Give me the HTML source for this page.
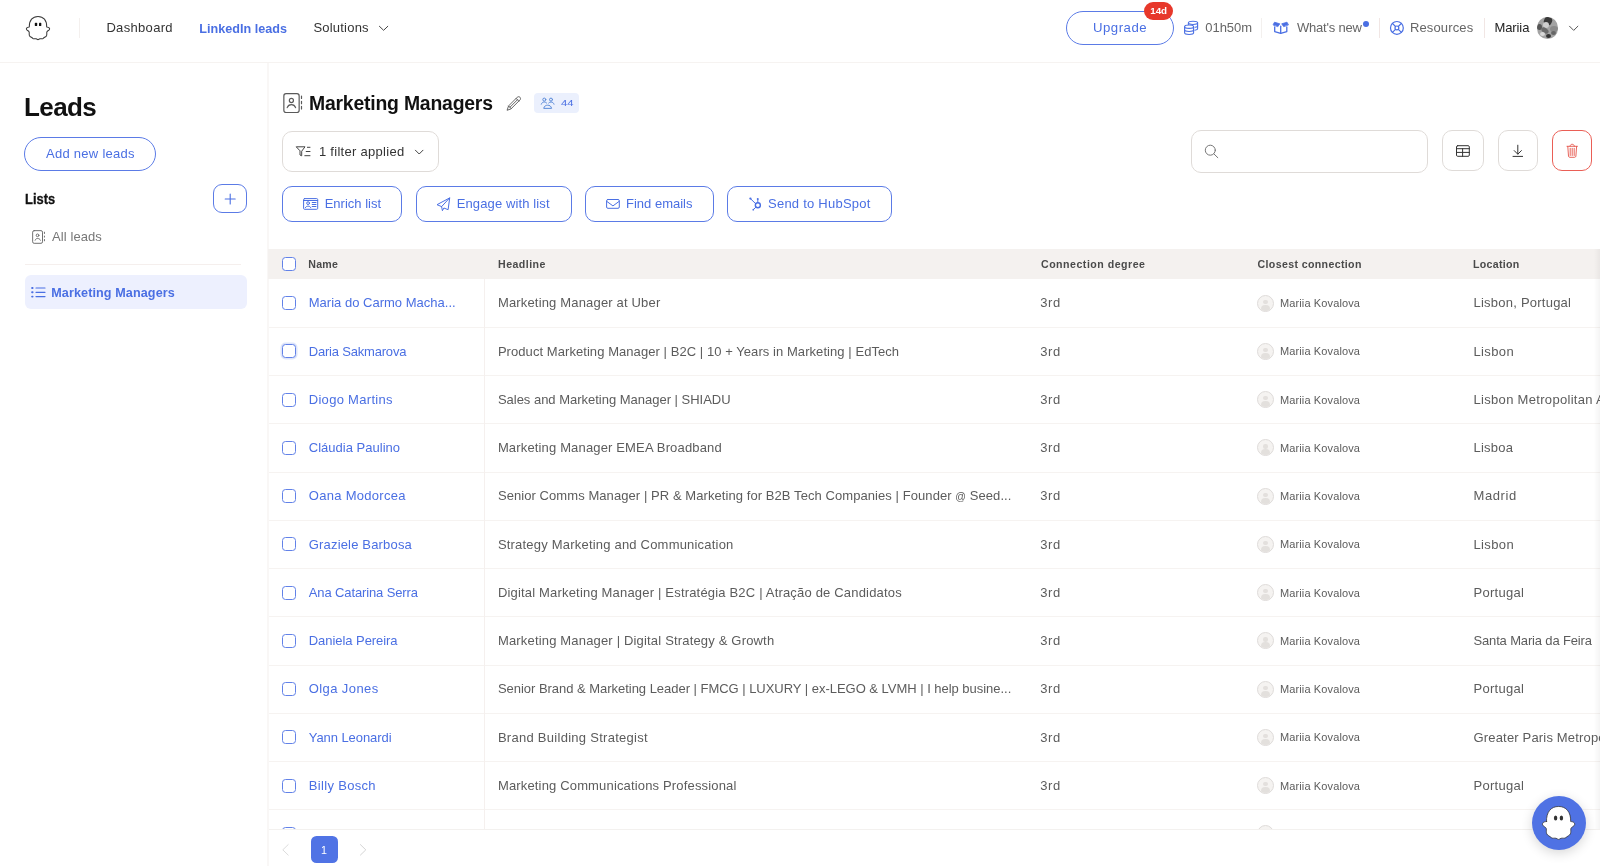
<!DOCTYPE html>
<html lang="en">
<head>
<meta charset="utf-8">
<title>Leads - Marketing Managers</title>
<style>
*{box-sizing:border-box;margin:0;padding:0}
html,body{width:1600px;height:866px;overflow:hidden;background:#fff}
body{font-family:"Liberation Sans",sans-serif;color:#1f1f1f;position:relative;font-size:13px}
.t{position:absolute;white-space:pre}
.b{position:absolute}
svg{position:absolute;overflow:visible}
.ln{position:absolute;background:#f5f2f0}
.cb{position:absolute;left:282px;width:14px;height:14px;border:1.1px solid #6282e8;border-radius:3.5px;background:#fff}
.av{position:absolute;left:1257px;width:17px;height:17px;border-radius:50%;border:1px solid #dedbd9;background:#f5f3f1;overflow:hidden}
.av:before{content:"";position:absolute;left:5.3px;top:4px;width:4.4px;height:4.4px;border-radius:50%;background:#e3e0dd}
.av:after{content:"";position:absolute;left:3px;top:9px;width:9px;height:9px;border-radius:4px 4px 0 0;background:#e3e0dd}
.btn{position:absolute;border:1px solid #5b7be6;background:#fff}
.gbtn{position:absolute;border:1px solid #dfdbd8;background:#fff;border-radius:10px}
</style>
</head>
<body>
<div id="app" style="position:absolute;left:0;top:0;width:1600px;height:866px;will-change:transform">
<!-- nav -->
<div class="ln" style="left:0;top:61.5px;width:1600px;height:1.5px;background:#f6f3f1"></div>
<div class="ln" style="left:79px;top:18px;width:1px;height:20px;background:#f4f0ee"></div>
<div class="btn" style="left:1066px;top:11px;width:108px;height:34px;border-radius:17px"></div>
<div class="b" style="left:1143.8px;top:1.9px;width:29.4px;height:18.4px;border-radius:9.2px;background:#e7382b"></div>
<div class="ln" style="left:1261px;top:18px;width:1px;height:20px;background:#f3f0ee"></div>
<div class="ln" style="left:1379px;top:18px;width:1px;height:20px;background:#f1e6e4"></div>
<div class="ln" style="left:1484px;top:18px;width:1px;height:20px;background:#f1e6e4"></div>
<div class="b" style="left:1363px;top:20.6px;width:6.4px;height:6.4px;border-radius:50%;background:#4a6fe3"></div>
<!-- sidebar -->
<div class="ln" style="left:267.2px;top:63px;width:1.7px;height:803px;background:#f9f7f6"></div>
<div class="btn" style="left:24px;top:137px;width:132px;height:34px;border-radius:17px"></div>
<div class="btn" style="left:213px;top:184px;width:34px;height:29px;border-radius:9px"></div>
<div class="ln" style="left:24.5px;top:264px;width:216px;height:1px;background:#f5efed"></div>
<div class="b" style="left:24.8px;top:275px;width:222.4px;height:34.1px;border-radius:6px;background:#edf0fe"></div>
<!-- main head -->
<div class="b" style="left:534.1px;top:93px;width:44.9px;height:20px;border-radius:4px;background:#ebf0fd"></div>
<div class="gbtn" style="left:282px;top:131px;width:156.5px;height:41px"></div>
<div class="btn" style="left:282px;top:186px;width:120px;height:36px;border-radius:10px"></div>
<div class="btn" style="left:416px;top:186px;width:156px;height:36px;border-radius:10px"></div>
<div class="btn" style="left:585px;top:186px;width:129px;height:36px;border-radius:10px"></div>
<div class="btn" style="left:727px;top:186px;width:165px;height:36px;border-radius:10px"></div>
<div class="gbtn" style="left:1191px;top:130px;width:237px;height:42.5px"></div>
<div class="gbtn" style="left:1442px;top:130px;width:42px;height:40.5px"></div>
<div class="gbtn" style="left:1498px;top:130px;width:40px;height:40.5px"></div>
<div class="gbtn" style="left:1552px;top:130px;width:40px;height:40.5px;border-color:#ea5f56"></div>
<!-- table -->
<div class="b" style="left:268px;top:249px;width:1332px;height:30px;background:#f4f1ef"></div>
<div class="cb" style="top:257px"></div>
<div class="ln" style="left:269px;top:326.75px;width:1331px;height:1.2px;background:#f6f3f1"></div>
<div class="cb" style="top:296.10px"></div>
<div class="av" style="top:294.60px"></div>
<div class="ln" style="left:269px;top:375.00px;width:1331px;height:1.2px;background:#f6f3f1"></div>
<div class="cb" style="top:344.35px;box-shadow:0 0 0 1.5px rgba(74,111,227,0.18)"></div>
<div class="av" style="top:342.85px"></div>
<div class="ln" style="left:269px;top:423.25px;width:1331px;height:1.2px;background:#f6f3f1"></div>
<div class="cb" style="top:392.60px"></div>
<div class="av" style="top:391.10px"></div>
<div class="ln" style="left:269px;top:471.50px;width:1331px;height:1.2px;background:#f6f3f1"></div>
<div class="cb" style="top:440.85px"></div>
<div class="av" style="top:439.35px"></div>
<div class="ln" style="left:269px;top:519.75px;width:1331px;height:1.2px;background:#f6f3f1"></div>
<div class="cb" style="top:489.10px"></div>
<div class="av" style="top:487.60px"></div>
<div class="ln" style="left:269px;top:568.00px;width:1331px;height:1.2px;background:#f6f3f1"></div>
<div class="cb" style="top:537.35px"></div>
<div class="av" style="top:535.85px"></div>
<div class="ln" style="left:269px;top:616.25px;width:1331px;height:1.2px;background:#f6f3f1"></div>
<div class="cb" style="top:585.60px"></div>
<div class="av" style="top:584.10px"></div>
<div class="ln" style="left:269px;top:664.50px;width:1331px;height:1.2px;background:#f6f3f1"></div>
<div class="cb" style="top:633.85px"></div>
<div class="av" style="top:632.35px"></div>
<div class="ln" style="left:269px;top:712.75px;width:1331px;height:1.2px;background:#f6f3f1"></div>
<div class="cb" style="top:682.10px"></div>
<div class="av" style="top:680.60px"></div>
<div class="ln" style="left:269px;top:761.00px;width:1331px;height:1.2px;background:#f6f3f1"></div>
<div class="cb" style="top:730.35px"></div>
<div class="av" style="top:728.85px"></div>
<div class="ln" style="left:269px;top:809.25px;width:1331px;height:1.2px;background:#f6f3f1"></div>
<div class="cb" style="top:778.60px"></div>
<div class="av" style="top:777.10px"></div>
<div class="ln" style="left:269px;top:857.50px;width:1331px;height:1.2px;background:#f6f3f1"></div>
<div class="cb" style="top:826.85px"></div>
<div class="av" style="top:825.35px"></div>
<div class="ln" style="left:484px;top:279px;width:1px;height:550px;background:#f5f0ee"></div>
<div class="b" style="left:1594px;top:249px;width:6px;height:580px;background:linear-gradient(to right,rgba(0,0,0,0),rgba(0,0,0,0.045))"></div>
<!-- footer -->
<div class="b" style="left:269px;top:829px;width:1331px;height:37px;background:#fff;border-top:1px solid #f3f1ef"></div>
<div class="b" style="left:311px;top:836.2px;width:26.6px;height:26.6px;border-radius:5.5px;background:#5073e5"></div>
<div class="b" style="left:1537px;top:17.3px;width:21.4px;height:21.4px;border-radius:50%;overflow:hidden;background:#a3a3a3">
<div class="b" style="left:7px;top:0;width:8px;height:8px;background:#3a3a3a;border-radius:40%;transform:rotate(20deg)"></div>
<div class="b" style="left:6px;top:5px;width:6px;height:6px;background:#cfcfcf;border-radius:50%"></div>
<div class="b" style="left:0;top:7px;width:5px;height:6px;background:#555;border-radius:50%"></div>
<div class="b" style="left:4px;top:11px;width:8px;height:5px;background:#6a6a6a;border-radius:50%;transform:rotate(35deg)"></div>
<div class="b" style="left:13px;top:9px;width:8px;height:6px;background:#8a8a8a;border-radius:50%"></div>
<div class="b" style="left:9px;top:17px;width:5px;height:4px;background:#333;border-radius:50%"></div>
<div class="b" style="left:14px;top:14px;width:5px;height:4px;background:#666;border-radius:50%"></div>
<div class="b" style="left:3px;top:15px;width:5px;height:4px;background:#d8d8d8;border-radius:50%"></div>
</div>
<!-- chat bubble -->
<div class="b" style="left:1532px;top:796px;width:54px;height:54px;border-radius:50%;background:#4f72e4;box-shadow:0 3px 12px rgba(0,0,0,0.16)"></div>
<svg width="1600" height="866" viewBox="0 0 1600 866" style="left:0;top:0" fill="none" stroke-linecap="round" stroke-linejoin="round">
<defs>
<path id="ghost" d="M3.3 11 C3.1 4.2 6.6 0.4 12 0.4 C17.4 0.4 20.9 4.2 20.7 11 C21.6 11.1 22.6 11.2 23.2 11.9 C24.1 12.9 23.4 13.9 22.4 14.5 C21.6 15 20.9 15.4 20.8 16.2 C20.7 17.4 21 18.6 20.5 19.7 C19.8 21 18.3 21.3 17.3 22.3 C16.4 23.1 14.9 22.5 13.8 22.8 C13.1 23 12.6 23.6 12 23.6 C11.4 23.6 10.9 23 10.2 22.8 C9.1 22.5 7.6 23.1 6.7 22.3 C5.7 21.3 4.2 21 3.5 19.7 C3 18.6 3.3 17.4 3.2 16.2 C3.1 15.4 2.4 15 1.6 14.5 C0.6 13.9 -0.1 12.9 0.8 11.9 C1.4 11.2 2.4 11.1 3.3 11 Z"/>
<g id="contact">
<rect x="0.6" y="0.6" width="16.2" height="19.6" rx="2.2"/>
<circle cx="8.7" cy="7.6" r="2.1"/>
<path d="M4.4 14.6 C5.2 12.4 6.8 11.6 8.7 11.6 C10.6 11.6 12.2 12.4 13 14.6"/>
<path d="M18.9 2.9V5.6M18.9 8.1V10.9M18.9 13.3V16.2"/>
</g>
</defs>
<!-- logo ghost -->
<use href="#ghost" x="26" y="16" stroke="#3a3a3a" stroke-width="1.05" fill="#fff"/>
<rect x="34.8" y="22.7" width="2.4" height="3.4" rx="0.7" fill="#111"/>
<rect x="39" y="22.7" width="2.3" height="3.4" rx="0.7" fill="#111"/>
<!-- solutions chevron -->
<path d="M379.4 26.3 L383.6 30.3 L387.8 26.3" stroke="#444" stroke-width="1"/>
<!-- coins -->
<g stroke="#4a6fe3" stroke-width="1.1">
<ellipse cx="1189.1" cy="26.7" rx="4.5" ry="1.7"/>
<path d="M1184.6 26.7V32.8C1184.6 33.8 1186.6 34.5 1189.1 34.5C1191.6 34.5 1193.6 33.8 1193.6 32.8V26.7"/>
<path d="M1184.6 29.8C1184.6 30.8 1186.6 31.5 1189.1 31.5C1191.6 31.5 1193.6 30.8 1193.6 29.8"/>
<path d="M1188.4 24.4V22.8C1188.4 21.8 1190.5 21.2 1193 21.2C1195.5 21.2 1197.6 21.8 1197.6 22.8V28.6C1197.6 29.4 1196.6 30 1194.9 30.2"/>
<path d="M1197.6 22.8C1197.6 23.8 1195.600 24.500 1193 24.500C1191.400 24.500 1190 24.200 1189.200 23.800"/>
<path d="M1197.6 25.7C1197.6 26.5 1196.6 27.1 1195 27.3"/>
</g>
<!-- gift/box -->
<g stroke="#4a6fe3" stroke-width="1.3">
<path d="M1274.7 27V31.6L1280.7 33.4L1286.8 31.6V27"/>
<path d="M1280.7 26.2V33.2"/>
<path d="M1273.2 24.6L1274.5 22.2L1279.8 23.8L1278 26.4Z" fill="#4a6fe3" stroke-width="0.8"/>
<path d="M1288.3 24.6L1287 22.2L1281.7 23.8L1283.5 26.4Z" fill="#4a6fe3" stroke-width="0.8"/>
</g>
<!-- lifebuoy -->
<g stroke="#4a6fe3" stroke-width="1.2">
<circle cx="1396.9" cy="27.9" r="6.4"/>
<circle cx="1396.9" cy="27.9" r="1.9"/>
<path d="M1392.4 23.4L1395.5 26.5M1401.4 23.4L1398.3 26.5M1392.4 32.4L1395.5 29.3M1401.4 32.4L1398.3 29.3"/>
</g>
<!-- user chevron -->
<path d="M1569.5 26.2L1573.7 30.4L1577.9 26.2" stroke="#555" stroke-width="1"/>
<!-- plus -->
<path d="M230.2 194V204M225.2 199H235.2" stroke="#4a6fe3" stroke-width="1.1"/>
<!-- all leads icon -->
<g stroke="#686868" stroke-width="0.95">
<rect x="32.650" y="230.650" width="9.850" height="12.650" rx="1.500"/>
<circle cx="37.550" cy="235.350" r="1.350"/>
<path d="M35.150 240.200C35.600 238.900 36.400 238.500 37.550 238.500C38.700 238.500 39.950 238.900 40.400 240.200"/>
<path d="M44.450 232.200V233.500M44.450 236.100V237.100M44.450 239.500V240.800"/>
</g>
<!-- list icon -->
<g stroke="#4a6fe3" stroke-width="1.2">
<path d="M36 288H45M36 292.3H45M36 296.6H45"/>
<path d="M32.1 288H32.6M32.1 292.3H32.6M32.1 296.6H32.6" stroke-width="1.9"/>
</g>
<!-- title contact icon -->
<g stroke="#5a5a5a" stroke-width="1.2">
<rect x="283.850" y="93.700" width="15.300" height="18.800" rx="2.200"/>
<circle cx="291.400" cy="100.500" r="2.050"/>
<path d="M287.200 107.600C288 105.400 289.500 104.600 291.400 104.600C293.300 104.600 294.800 105.400 295.600 107.600"/>
<path d="M301.500 96V98.400M301.500 101.300V103.700M301.500 106.400V109"/>
</g>
<!-- pencil -->
<g stroke="#555" stroke-width="0.9">
<path d="M507.2 109.9L508.6 105.9L517.3 97.2C518 96.5 519.2 96.5 519.9 97.2L520 97.3C520.7 98 520.7 99.2 520 99.9L511.3 108.6Z"/>
<path d="M508.6 105.9L511.3 108.6M516.1 98.4L518.8 101.1M510 107.2L517.5 99.7"/>
</g>
<!-- people icon -->
<g stroke="#5b8bd9" stroke-width="1">
<circle cx="544.3" cy="99.6" r="1.5"/><circle cx="551" cy="99.6" r="1.5"/>
<path d="M541.3 104.2C541.8 102.6 543 102 544.3 102C545.2 102 546 102.4 546.6 103"/>
<path d="M554 104.2C553.500 102.600 552.300 102 551 102C550.100 102 549.300 102.400 548.700 103"/>
<path d="M543.800 108C544.300 106 545.800 105.200 547.650 105.200C549.500 105.200 551 106 551.500 108Z"/>
</g>
<!-- filter icon -->
<g stroke="#444" stroke-width="1">
<path d="M296.600 146.800H305L301.700 151.200V155.800L300 155V151.200Z"/>
<path d="M307.400 147.300H310M306.200 151.500H310M304.800 155.700H310"/>
<path d="M415.400 150.200L419.200 154L423 150.200"/>
</g>
<!-- enrich id card -->
<g stroke="#4a6fe3" stroke-width="1">
<rect x="303.600" y="198.600" width="14.100" height="10.700" rx="1"/>
<path d="M303.600 200.500H317.700"/>
<circle cx="308.100" cy="203.150" r="1.400"/>
<path d="M305.400 207.700C305.900 206.500 306.900 206.200 308.100 206.200C309.300 206.200 310.300 206.500 310.800 207.700"/>
<path d="M312.200 202.500H316M312.200 204.500H316M312.200 206.500H316"/>
</g>
<!-- plane -->
<path d="M449.700 197.900L437 204.700L441.600 206.600L449.700 197.900L448.100 209.700L443.900 208L442.400 210.700L441.600 206.600" stroke="#4a6fe3" stroke-width="1"/>
<!-- mail -->
<g stroke="#4a6fe3" stroke-width="1">
<rect x="606.600" y="199.500" width="12.700" height="8.800" rx="1.300"/>
<path d="M606.800 201.400L612.950 205.900L619.100 201.400"/>
</g>
<!-- hubspot -->
<g stroke="#4a6fe3">
<circle cx="757.850" cy="205.200" r="2.500" stroke-width="1.400"/>
<path d="M757.800 202.500V199.500M755.700 203.700L750.800 199M755.900 207.200L753.600 209.400" stroke-width="1"/>
<circle cx="757.750" cy="198.900" r="1" fill="#4a6fe3" stroke="none"/>
<circle cx="750.400" cy="198.600" r="1.150" fill="#4a6fe3" stroke="none"/>
<circle cx="753.300" cy="209.700" r="0.850" fill="#4a6fe3" stroke="none"/>
</g>
<!-- search -->
<g stroke="#777" stroke-width="1">
<circle cx="1210.300" cy="150.200" r="5"/>
<path d="M1213.900 153.900L1217.800 157.700"/>
</g>
<!-- table icon -->
<g stroke="#333" stroke-width="1">
<rect x="1456.500" y="145.700" width="12.800" height="10.600" rx="1.200"/>
<path d="M1456.500 148.700H1469.300M1456.500 152.400H1469.300M1462.600 148.700V156.300"/>
</g>
<!-- download -->
<g stroke="#333" stroke-width="1">
<path d="M1517.800 145.200V154M1514.200 150.600L1517.800 154.200L1521.400 150.600M1513 156.400H1522.600"/>
</g>
<!-- trash -->
<g stroke="#e5534a" stroke-width="0.9">
<path d="M1567 146.300H1577.400"/>
<path d="M1570 146.200C1570.300 144.700 1571.200 144.300 1572.200 144.300C1573.200 144.300 1574.100 144.700 1574.400 146.200"/>
<path d="M1567.800 146.500L1568.500 156.200C1568.600 156.900 1569.100 157.300 1569.800 157.300H1574.600C1575.300 157.300 1575.800 156.900 1575.900 156.200L1576.600 146.500"/>
<path d="M1570.200 148.300V155.500M1572.200 148.300V155.500M1574.200 148.300V155.500"/>
</g>
<!-- pagination arrows -->
<path d="M288.200 844.600L282.800 849.850L288.200 855.100" stroke="#d8d8d8" stroke-width="0.9"/>
<path d="M360.400 844.600L365.800 849.850L360.400 855.100" stroke="#cfcfcf" stroke-width="0.9"/>
<!-- chat ghost -->
<g transform="translate(1541.900,805.900) scale(1.39,1.42)">
<use href="#ghost" stroke="#333" stroke-width="0.55" fill="#fff"/>
</g>
<ellipse cx="1555.600" cy="817.900" rx="1.700" ry="2.500" fill="#333"/>
<ellipse cx="1561.400" cy="817.900" rx="1.700" ry="2.500" fill="#333"/>
</svg>

<div class="t" style="top:19px;font-size:13.0px;line-height:17px;color:#333;left:106.40px;letter-spacing:0.325px;">Dashboard</div>
<div class="t" style="top:21px;font-size:12.6px;line-height:16px;color:#4a6fe3;font-weight:700;left:199.25px;letter-spacing:0.019px;">LinkedIn leads</div>
<div class="t" style="top:19px;font-size:13.0px;line-height:17px;color:#333;left:313.40px;letter-spacing:0.213px;">Solutions</div>
<div class="t" style="top:19px;font-size:13.2px;line-height:17px;color:#4a6fe3;left:1093.00px;letter-spacing:0.500px;">Upgrade</div>
<div class="t" style="top:4px;font-size:9.8px;line-height:13px;color:#fff;font-weight:700;left:1150.20px;letter-spacing:0.000px;">14d</div>
<div class="t" style="top:19px;font-size:13.0px;line-height:17px;color:#666;left:1205.30px;letter-spacing:-0.060px;">01h50m</div>
<div class="t" style="top:19px;font-size:13.0px;line-height:17px;color:#666;left:1297.00px;letter-spacing:-0.222px;">What&#x27;s new</div>
<div class="t" style="top:19px;font-size:13.0px;line-height:17px;color:#666;left:1410.00px;letter-spacing:0.125px;">Resources</div>
<div class="t" style="top:19px;font-size:13.0px;line-height:17px;color:#222;left:1494.40px;letter-spacing:-0.080px;">Mariia</div>
<div class="t" style="top:90px;font-size:26px;line-height:34px;color:#111;font-weight:700;left:24.06px;letter-spacing:-0.615px;">Leads</div>
<div class="t" style="top:145px;font-size:13.0px;line-height:17px;color:#4a6fe3;left:46.00px;letter-spacing:0.275px;">Add new leads</div>
<div class="t" style="top:189px;font-size:15.2px;line-height:20px;color:#111;font-weight:700;left:24.75px;transform-origin:0 50%;transform:scaleX(0.8500);-webkit-text-stroke:0.3px #111;">Lists</div>
<div class="t" style="top:228px;font-size:13.0px;line-height:17px;color:#777;left:51.95px;letter-spacing:0.100px;">All leads</div>
<div class="t" style="top:285px;font-size:12.6px;line-height:16px;color:#4a6fe3;font-weight:700;left:51.25px;letter-spacing:0.103px;">Marketing Managers</div>
<div class="t" style="top:91px;font-size:19.4px;line-height:25px;color:#111;font-weight:700;left:309.00px;letter-spacing:-0.206px;">Marketing Managers</div>
<div class="t" style="top:98px;font-size:8.8px;line-height:11px;color:#4a6fe3;left:560.50px;transform-origin:0 50%;transform:scaleX(1.2778);">44</div>
<div class="t" style="top:143px;font-size:13.0px;line-height:17px;color:#333;left:318.90px;letter-spacing:0.287px;">1 filter applied</div>
<div class="t" style="top:195px;font-size:13.0px;line-height:17px;color:#4a6fe3;left:324.70px;letter-spacing:0.005px;">Enrich list</div>
<div class="t" style="top:195px;font-size:13.0px;line-height:17px;color:#4a6fe3;left:456.70px;letter-spacing:0.120px;">Engage with list</div>
<div class="t" style="top:195px;font-size:13.0px;line-height:17px;color:#4a6fe3;left:626.00px;letter-spacing:0.000px;">Find emails</div>
<div class="t" style="top:195px;font-size:13.0px;line-height:17px;color:#4a6fe3;left:768.00px;letter-spacing:0.243px;">Send to HubSpot</div>
<div class="t" style="top:257px;font-size:10.6px;line-height:14px;color:#4a4a4a;font-weight:700;left:308.25px;letter-spacing:0.283px;">Name</div>
<div class="t" style="top:257px;font-size:10.6px;line-height:14px;color:#4a4a4a;font-weight:700;left:498.10px;letter-spacing:0.443px;">Headline</div>
<div class="t" style="top:257px;font-size:10.6px;line-height:14px;color:#4a4a4a;font-weight:700;left:1041.00px;letter-spacing:0.500px;">Connection degree</div>
<div class="t" style="top:257px;font-size:10.6px;line-height:14px;color:#4a4a4a;font-weight:700;left:1257.50px;letter-spacing:0.365px;">Closest connection</div>
<div class="t" style="top:257px;font-size:10.6px;line-height:14px;color:#4a4a4a;font-weight:700;left:1473.00px;letter-spacing:0.314px;">Location</div>
<div class="t" style="top:294px;font-size:13.0px;line-height:17px;color:#4a6fe3;left:308.75px;letter-spacing:0.011px;">Maria do Carmo Macha...</div>
<div class="t" style="top:294px;font-size:13.0px;line-height:17px;color:#5c5c5c;left:497.90px;letter-spacing:0.171px;">Marketing Manager at Uber</div>
<div class="t" style="top:294px;font-size:13.0px;line-height:17px;color:#5c5c5c;left:1040.20px;letter-spacing:0.650px;">3rd</div>
<div class="t" style="top:296px;font-size:11.0px;line-height:14px;color:#5c5c5c;left:1280.00px;letter-spacing:0.121px;">Mariia Kovalova</div>
<div class="t" style="top:294px;font-size:13.0px;line-height:17px;color:#5c5c5c;left:1473.50px;letter-spacing:0.233px;">Lisbon, Portugal</div>
<div class="t" style="top:343px;font-size:13.0px;line-height:17px;color:#4a6fe3;left:308.75px;letter-spacing:-0.196px;">Daria Sakmarova</div>
<div class="t" style="top:343px;font-size:13.0px;line-height:17px;color:#5c5c5c;left:497.90px;letter-spacing:0.063px;">Product Marketing Manager | B2C | 10 + Years in Marketing | EdTech</div>
<div class="t" style="top:343px;font-size:13.0px;line-height:17px;color:#5c5c5c;left:1040.20px;letter-spacing:0.650px;">3rd</div>
<div class="t" style="top:344px;font-size:11.0px;line-height:14px;color:#5c5c5c;left:1280.00px;letter-spacing:0.121px;">Mariia Kovalova</div>
<div class="t" style="top:343px;font-size:13.0px;line-height:17px;color:#5c5c5c;left:1473.50px;letter-spacing:0.360px;">Lisbon</div>
<div class="t" style="top:391px;font-size:13.0px;line-height:17px;color:#4a6fe3;left:308.75px;letter-spacing:0.296px;">Diogo Martins</div>
<div class="t" style="top:391px;font-size:13.0px;line-height:17px;color:#5c5c5c;left:497.90px;letter-spacing:-0.014px;">Sales and Marketing Manager | SHIADU</div>
<div class="t" style="top:391px;font-size:13.0px;line-height:17px;color:#5c5c5c;left:1040.20px;letter-spacing:0.650px;">3rd</div>
<div class="t" style="top:393px;font-size:11.0px;line-height:14px;color:#5c5c5c;left:1280.00px;letter-spacing:0.121px;">Mariia Kovalova</div>
<div class="t" style="top:391px;font-size:13.0px;line-height:17px;color:#5c5c5c;left:1473.50px;letter-spacing:0.311px;">Lisbon Metropolitan Area</div>
<div class="t" style="top:439px;font-size:13.0px;line-height:17px;color:#4a6fe3;left:308.75px;letter-spacing:0.018px;">Cláudia Paulino</div>
<div class="t" style="top:439px;font-size:13.0px;line-height:17px;color:#5c5c5c;left:497.90px;letter-spacing:0.155px;">Marketing Manager EMEA Broadband</div>
<div class="t" style="top:439px;font-size:13.0px;line-height:17px;color:#5c5c5c;left:1040.20px;letter-spacing:0.650px;">3rd</div>
<div class="t" style="top:441px;font-size:11.0px;line-height:14px;color:#5c5c5c;left:1280.00px;letter-spacing:0.121px;">Mariia Kovalova</div>
<div class="t" style="top:439px;font-size:13.0px;line-height:17px;color:#5c5c5c;left:1473.50px;letter-spacing:0.220px;">Lisboa</div>
<div class="t" style="top:487px;font-size:13.0px;line-height:17px;color:#4a6fe3;left:308.75px;letter-spacing:0.296px;">Oana Modorcea</div>
<div class="t" style="top:487px;font-size:13.0px;line-height:17px;color:#5c5c5c;left:497.90px;letter-spacing:0.072px;">Senior Comms Manager | PR &amp; Marketing for B2B Tech Companies | Founder <span style="font-size:10.5px;position:relative;top:-0.3px">@</span> Seed...</div>
<div class="t" style="top:487px;font-size:13.0px;line-height:17px;color:#5c5c5c;left:1040.20px;letter-spacing:0.650px;">3rd</div>
<div class="t" style="top:489px;font-size:11.0px;line-height:14px;color:#5c5c5c;left:1280.00px;letter-spacing:0.121px;">Mariia Kovalova</div>
<div class="t" style="top:487px;font-size:13.0px;line-height:17px;color:#5c5c5c;left:1473.50px;letter-spacing:0.600px;">Madrid</div>
<div class="t" style="top:536px;font-size:13.0px;line-height:17px;color:#4a6fe3;left:308.75px;letter-spacing:0.177px;">Graziele Barbosa</div>
<div class="t" style="top:536px;font-size:13.0px;line-height:17px;color:#5c5c5c;left:497.90px;letter-spacing:0.203px;">Strategy Marketing and Communication</div>
<div class="t" style="top:536px;font-size:13.0px;line-height:17px;color:#5c5c5c;left:1040.20px;letter-spacing:0.650px;">3rd</div>
<div class="t" style="top:537px;font-size:11.0px;line-height:14px;color:#5c5c5c;left:1280.00px;letter-spacing:0.121px;">Mariia Kovalova</div>
<div class="t" style="top:536px;font-size:13.0px;line-height:17px;color:#5c5c5c;left:1473.50px;letter-spacing:0.360px;">Lisbon</div>
<div class="t" style="top:584px;font-size:13.0px;line-height:17px;color:#4a6fe3;left:308.75px;letter-spacing:-0.121px;">Ana Catarina Serra</div>
<div class="t" style="top:584px;font-size:13.0px;line-height:17px;color:#5c5c5c;left:497.90px;letter-spacing:0.183px;">Digital Marketing Manager | Estratégia B2C | Atração de Candidatos</div>
<div class="t" style="top:584px;font-size:13.0px;line-height:17px;color:#5c5c5c;left:1040.20px;letter-spacing:0.650px;">3rd</div>
<div class="t" style="top:586px;font-size:11.0px;line-height:14px;color:#5c5c5c;left:1280.00px;letter-spacing:0.121px;">Mariia Kovalova</div>
<div class="t" style="top:584px;font-size:13.0px;line-height:17px;color:#5c5c5c;left:1473.50px;letter-spacing:0.271px;">Portugal</div>
<div class="t" style="top:632px;font-size:13.0px;line-height:17px;color:#4a6fe3;left:308.75px;letter-spacing:-0.054px;">Daniela Pereira</div>
<div class="t" style="top:632px;font-size:13.0px;line-height:17px;color:#5c5c5c;left:497.90px;letter-spacing:0.175px;">Marketing Manager | Digital Strategy &amp; Growth</div>
<div class="t" style="top:632px;font-size:13.0px;line-height:17px;color:#5c5c5c;left:1040.20px;letter-spacing:0.650px;">3rd</div>
<div class="t" style="top:634px;font-size:11.0px;line-height:14px;color:#5c5c5c;left:1280.00px;letter-spacing:0.121px;">Mariia Kovalova</div>
<div class="t" style="top:632px;font-size:13.0px;line-height:17px;color:#5c5c5c;left:1473.50px;letter-spacing:-0.158px;">Santa Maria da Feira</div>
<div class="t" style="top:680px;font-size:13.0px;line-height:17px;color:#4a6fe3;left:308.75px;letter-spacing:0.406px;">Olga Jones</div>
<div class="t" style="top:680px;font-size:13.0px;line-height:17px;color:#5c5c5c;left:497.90px;letter-spacing:-0.028px;">Senior Brand &amp; Marketing Leader | FMCG | LUXURY | ex-LEGO &amp; LVMH | I help busine...</div>
<div class="t" style="top:680px;font-size:13.0px;line-height:17px;color:#5c5c5c;left:1040.20px;letter-spacing:0.650px;">3rd</div>
<div class="t" style="top:682px;font-size:11.0px;line-height:14px;color:#5c5c5c;left:1280.00px;letter-spacing:0.121px;">Mariia Kovalova</div>
<div class="t" style="top:680px;font-size:13.0px;line-height:17px;color:#5c5c5c;left:1473.50px;letter-spacing:0.271px;">Portugal</div>
<div class="t" style="top:729px;font-size:13.0px;line-height:17px;color:#4a6fe3;left:308.75px;letter-spacing:-0.062px;">Yann Leonardi</div>
<div class="t" style="top:729px;font-size:13.0px;line-height:17px;color:#5c5c5c;left:497.90px;letter-spacing:0.279px;">Brand Building Strategist</div>
<div class="t" style="top:729px;font-size:13.0px;line-height:17px;color:#5c5c5c;left:1040.20px;letter-spacing:0.650px;">3rd</div>
<div class="t" style="top:730px;font-size:11.0px;line-height:14px;color:#5c5c5c;left:1280.00px;letter-spacing:0.121px;">Mariia Kovalova</div>
<div class="t" style="top:729px;font-size:13.0px;line-height:17px;color:#5c5c5c;left:1473.50px;letter-spacing:0.174px;">Greater Paris Metropolitan Region</div>
<div class="t" style="top:777px;font-size:13.0px;line-height:17px;color:#4a6fe3;left:308.75px;letter-spacing:0.325px;">Billy Bosch</div>
<div class="t" style="top:777px;font-size:13.0px;line-height:17px;color:#5c5c5c;left:497.90px;letter-spacing:0.161px;">Marketing Communications Professional</div>
<div class="t" style="top:777px;font-size:13.0px;line-height:17px;color:#5c5c5c;left:1040.20px;letter-spacing:0.650px;">3rd</div>
<div class="t" style="top:779px;font-size:11.0px;line-height:14px;color:#5c5c5c;left:1280.00px;letter-spacing:0.121px;">Mariia Kovalova</div>
<div class="t" style="top:777px;font-size:13.0px;line-height:17px;color:#5c5c5c;left:1473.50px;letter-spacing:0.271px;">Portugal</div>
<div class="t" style="top:843px;font-size:10.7px;line-height:14px;color:#fff;left:321.00px;letter-spacing:-0.600px;">1</div>
</div>
</body>
</html>
